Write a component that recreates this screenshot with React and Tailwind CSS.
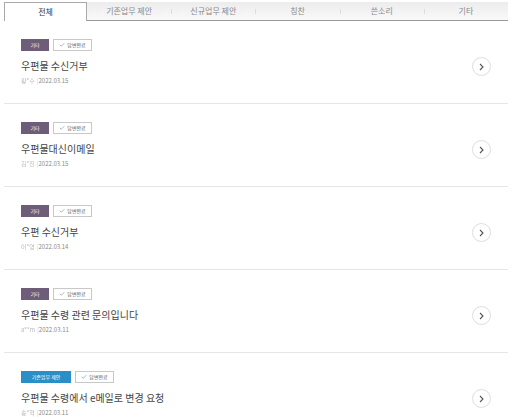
import { Check } from 'lucide-react';

const tabs = ['전체', '기존업무 제안', '신규업무 제안', '칭찬', '쓴소리', '기타'];

const posts = [
  { category: '기타', title: '우편물 수신거부', writer: '황*수', date: '2022.03.15' },
  { category: '기타', title: '우편물대신이메일', writer: '김*진', date: '2022.03.15' },
  { category: '기타', title: '우편 수신거부', writer: '이*영', date: '2022.03.14' },
  { category: '기타', title: '우편물 수령 관련 문의입니다', writer: 'a**m', date: '2022.03.11' },
  { category: '기존업무 제안', title: '우편물 수령에서 e메일로 변경 요청', writer: '송*혁', date: '2022.03.11' },
];

const font = { fontFamily: '"Noto Sans CJK KR", "Noto Sans", sans-serif' };

const App = () => {
  return (
    <div className="w-[512px] h-[419px] bg-white overflow-hidden" style={font}>
      {/* Tabs */}
      <div className="mx-[4px] mt-[2px] flex h-[19px] bg-gradient-to-b from-[#ececec] to-[#fafafa]">
        {tabs.map((tab, i) =>
          i === 0 ? (
            <div
              key={tab}
              className="w-[83px] shrink-0 flex items-center justify-center bg-white border-t border-x border-[#a9a9a9] text-[8px] text-[#333]"
            >
              {tab}
            </div>
          ) : (
            <div
              key={tab}
              className="flex-1 relative flex items-center justify-center border-b border-[#9a9a9a] text-[8px] text-[#8a8a8a]"
            >
              {i > 1 && <span className="absolute left-0 top-[7px] h-[5px] w-px bg-[#dcdcdc]"></span>}
              {tab}
            </div>
          )
        )}
      </div>

      {/* List */}
      <div className="mx-[4px]">
        {posts.map((post, index) => (
          <div key={index} className="h-[83px] border-b border-[#e6e6e6] flex items-start justify-between pl-[17px] pr-[17px]">
            <div className="pt-[18px]">
              <div className="flex items-center gap-[4px]">
                <span
                  className={
                    post.category === '기타'
                      ? 'h-[12px] w-[28px] flex items-center justify-center bg-[#6d5d78] text-white text-[5px]'
                      : 'h-[12px] w-[50px] flex items-center justify-center bg-[#2a8fc6] text-white text-[5px]'
                  }
                >
                  {post.category}
                </span>
                <span className="h-[12px] w-[39px] flex items-center justify-center gap-[2px] border border-[#c8c8c8] text-[5px] text-[#555]">
                  <Check size={6} strokeWidth={2} className="text-[#666]" />
                  답변완료
                </span>
              </div>
              <p className="mt-[8px] text-[10px] leading-[14px] text-[#444]">{post.title}</p>
              <p className="mt-[4px] flex items-center text-[6px] leading-[8px] text-[#8a8a8a]">
                <span className="text-[#bbb] blur-[0.5px]">{post.writer}</span>
                <span className="ml-[2px] text-[#ccc]">|</span>
                <span>{post.date}</span>
              </p>
            </div>
            <div className="mt-[36px] w-[19px] h-[19px] rounded-full border border-[#dedede] flex items-center justify-center">
              <svg width="5" height="8" viewBox="0 0 5 8">
                <path d="M1 1 L4 4 L1 7" fill="none" stroke="#555" strokeWidth="1.1" />
              </svg>
            </div>
          </div>
        ))}
      </div>
    </div>
  );
};

export default App;
